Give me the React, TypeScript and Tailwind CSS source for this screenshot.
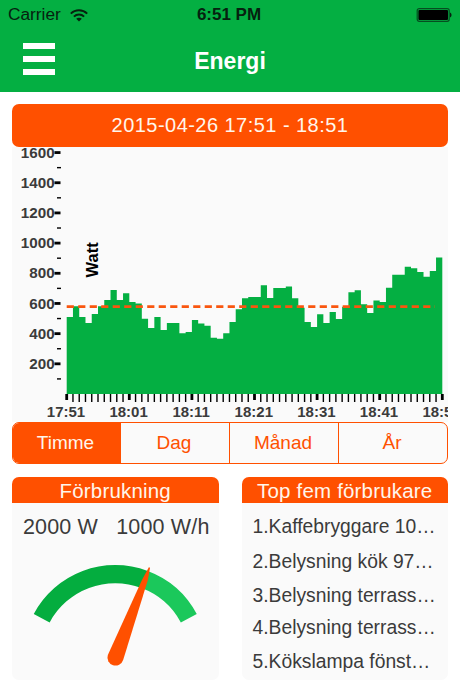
import { useState } from 'react';

const USAGE = [
	510, 581, 510, 470, 530, 581, 623, 689, 623, 667, 609, 600, 499, 437, 510, 424, 470, 470, 402, 411, 490, 468, 453,
	373, 366, 402, 477, 561, 634, 642, 642, 720, 636, 702, 702, 713, 634, 572, 477, 444, 528, 470, 543, 497, 578, 675,
	687, 594, 536, 620, 609, 704, 790, 790, 843, 834, 808, 777, 815, 905,
];
const X_LABELS = ['17:51', '18:01', '18:11', '18:21', '18:31', '18:41', '18:51'];
const PERIODS = ['Timme', 'Dag', 'Månad', 'År'];
const TOP_CONSUMERS = [
	{ text: '1.Kaffebryggare 10…', height: 'h-[35px]' },
	{ text: '2.Belysning kök 97…', height: 'h-[34px]' },
	{ text: '3.Belysning terrass…', height: 'h-[32px]' },
	{ text: '4.Belysning terrass…', height: 'h-[34px]' },
	{ text: '5.Kökslampa fönst…', height: 'h-[34px]' },
];

// chart geometry, in px inside the svg
const LEFT = 54.7;
const BASE = 247;
const STEP = 6.26;
const PX_PER_WATT = 0.1509;
const AVERAGE = 579;

const yOf = (watt: number) => BASE - watt * PX_PER_WATT;

function StatusBar() {
	return (
		<div className="grid grid-cols-3 items-center h-[30px] pl-[8px] pr-[8px] text-[17px] text-[#06210f]">
			<div className="flex items-center gap-[9px]">
				<span className="text-[17.3px]">Carrier</span>
				<svg width="18" height="13" viewBox="0 0 18 13" fill="none" stroke="currentColor" strokeWidth="2">
					<path d="M0.8 4.6C5.4 0 12.6 0 17.2 4.6" />
					<path d="M3.9 7.6C6.8 4.8 11.2 4.8 14.1 7.6" />
					<path d="M9 12.6L6.2 9.7C7.8 8.3 10.2 8.3 11.8 9.7Z" fill="currentColor" stroke="none" />
				</svg>
			</div>
			<span className="text-center font-bold pr-[2px]">6:51 PM</span>
			<svg className="justify-self-end" width="36" height="14" viewBox="0 0 36 14">
				<rect x="1.2" y="0.7" width="32" height="12.6" rx="2" fill="none" stroke="#064d20" strokeWidth="1.2" />
				<rect x="2.4" y="2" width="29.6" height="10" rx="1" fill="#000" />
				<path d="M34 4.5C36 5.2 36 8.8 34 9.5Z" fill="#06210f" />
			</svg>
		</div>
	);
}

function Chart() {
	return (
		<svg className="block w-full h-[275px] bg-[#fafafa]" viewBox="0 0 436 275">
			<g fontSize="15" fontWeight="bold" fill="#3b3b3b">
				{[200, 400, 600, 800, 1000, 1200, 1400, 1600].map((watt) => (
					<g key={watt}>
						<text x="42.6" y={yOf(watt) + 5.2} textAnchor="end" fontSize="15.2">
							{watt}
						</text>
						<rect x="42.5" y={yOf(watt) - 1.4} width="6" height="2.8" fill="#000" />
						<rect x="45" y={yOf(watt - 100) - 0.7} width="4" height="1.4" fill="#000" />
					</g>
				))}
				{X_LABELS.map((label, index) => (
					<text key={label} x={LEFT + index * STEP * 10 - 0.7} y="269.7" textAnchor="middle">
						{label}
					</text>
				))}
			</g>
			<path
				fill="#04af42"
				d={`M${LEFT} ${BASE}${USAGE.map((watt, i) => `V${yOf(watt)}H${LEFT + (i + 1) * STEP}`).join('')}V${BASE}Z`}
			/>
			{Array.from({ length: 61 }, (_, i) => (
				<rect
					key={i}
					x={LEFT + i * STEP - (i % 10 === 0 ? 1.4 : 0.7)}
					y={BASE}
					width={i % 10 === 0 ? 2.8 : 1.4}
					height={i % 10 === 0 ? 6 : 8}
				/>
			))}
			<path
				d={`M${LEFT} ${yOf(AVERAGE)}H423`}
				fill="none"
				stroke="#f9560f"
				strokeWidth="2.9"
				strokeDasharray="7.19 4.31"
			/>
			<text transform="translate(86 130.5) rotate(-90)" fontSize="16.5" fontWeight="bold">
				Watt
			</text>
		</svg>
	);
}

function Gauge() {
	return (
		<svg className="block w-full h-[131px]" viewBox="0 0 206 131">
			<path d="M21.5 65A92.3 92.3 0 0 1 135.5 22L129.2 39A74.3 74.3 0 0 0 37.4 73.4Z" fill="#04ad3f" />
			<path d="M135.5 22A92.3 92.3 0 0 1 184.5 65L168.6 73.4A74.3 74.3 0 0 0 129.2 39Z" fill="#1bc85b" />
			<path d="M136.6 18.3L129.7 31L95.6 106A8 8 0 1 0 110.9 111L135.6 31L137.8 18.8Z" fill="#ff5000" />
		</svg>
	);
}

function Card({ title, children }: { title: string; children: React.ReactNode }) {
	return (
		<div className="w-[206.5px] h-[203px] rounded-[7px] overflow-hidden bg-[#fafafa]">
			<h2 className="h-[26px] leading-[27px] bg-[#ff5000] text-center text-[20.5px] tracking-[0.18px] text-[#fff6ec]">
				{title}
			</h2>
			{children}
		</div>
	);
}

export default function App() {
	const [period, setPeriod] = useState('Timme');
	return (
		<div className="w-[460px] h-[690px] overflow-hidden bg-white text-[#3b3b3b] font-['Liberation_Sans',Arial,sans-serif]">
			<header className="h-[92px] bg-[#04af42]">
				<StatusBar />
				<div className="grid grid-cols-3 h-[62px] pl-[23px] pr-[23px]">
					<button type="button" className="flex flex-col justify-start gap-[7px] w-8 pt-[13px]">
						<span className="w-8 h-[6px] bg-white" />
						<span className="w-8 h-[6px] bg-white" />
						<span className="w-8 h-[6px] bg-white" />
					</button>
					<h1 className="text-center leading-[62px] text-[23px] font-bold text-white">Energi</h1>
				</div>
			</header>
			<main className="px-3 pt-3">
				<div className="h-[43px] leading-[43px] rounded-[7px] bg-[#ff5000] text-center text-[20px] tracking-[0.46px] text-[#fff6ec]">
					2015-04-26 17:51 - 18:51
				</div>
				<Chart />
				<div className="flex h-[42px] rounded-[7px] overflow-hidden border-[1.5px] border-[#ff5000] bg-[#fafafa]">
					{PERIODS.map((name) => (
						<button
							key={name}
							type="button"
							onClick={() => setPeriod(name)}
							className={`w-[109px] first:w-[107px] pr-[2px] text-[19px] border-l-[1.5px] first:border-l-0 border-[#ff5000] ${
								period === name ? 'bg-[#ff5000] text-[#fff6ec]' : 'text-[#ff5000]'
							}`}
						>
							{name}
						</button>
					))}
				</div>
				<div className="flex justify-between mt-[13px]">
					<Card title="Förbrukning">
						<div className="flex justify-between h-[46px] pl-[11px] pr-[9px] pt-[8px] text-[21.5px] tracking-[0.15px]">
							<span>2000 W</span>
							<span>1000 W/h</span>
						</div>
						<Gauge />
					</Card>
					<Card title="Top fem förbrukare">
						<ul className="pl-[11px] pt-[7px] text-[19.3px] whitespace-nowrap">
							{TOP_CONSUMERS.map(({ text, height }) => (
								<li key={text} className={`${height} leading-[34px]`}>
									{text}
								</li>
							))}
						</ul>
					</Card>
				</div>
			</main>
		</div>
	);
}
